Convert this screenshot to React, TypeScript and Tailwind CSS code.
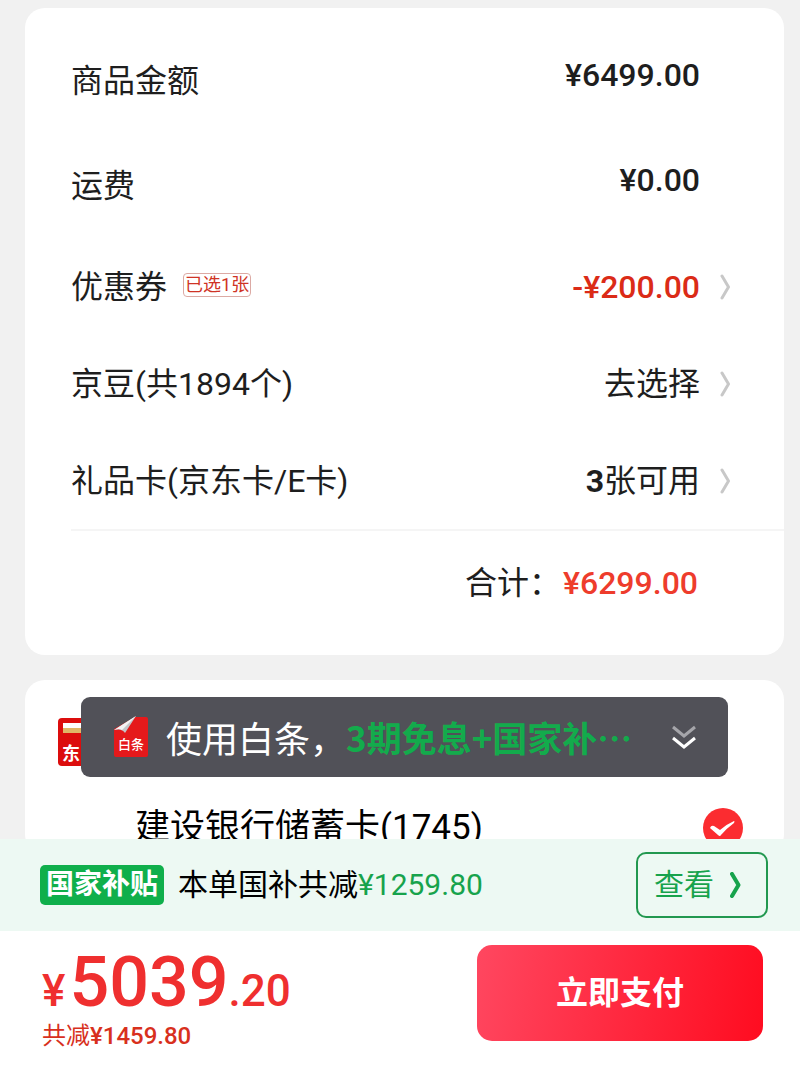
import React, { useState } from "react";

interface PriceRow {
  id: string;
  label: string;
  value: React.ReactNode;
  tag?: string;
  valueClass?: string;
  link?: boolean;
}

const rows: PriceRow[] = [
  { id: "goods", label: "商品金额", value: "¥6499.00", valueClass: "pb-3 font-medium" },
  { id: "freight", label: "运费", value: "¥0.00", valueClass: "pb-3 font-medium" },
  {
    id: "coupon",
    label: "优惠券",
    tag: "已选1张",
    value: "-¥200.00",
    valueClass: "font-medium text-[#db2b17]",
    link: true,
  },
  { id: "beans", label: "京豆(共1894个)", value: "去选择", link: true },
  {
    id: "giftcard",
    label: "礼品卡(京东卡/E卡)",
    value: (
      <>
        <span className="font-bold">3</span>张可用
      </>
    ),
    link: true,
  },
];

const Chevron: React.FC<{ className: string }> = ({ className }) => (
  <svg className={className} viewBox="0 0 12 26" fill="none" stroke="currentColor" aria-hidden="true">
    <path d="M2 2 L8.500 13 L2 24" strokeLinecap="round" strokeLinejoin="round" />
  </svg>
);

const WalletIcon = () => (
  <svg className="h-12 w-16" viewBox="0 0 64 48" aria-hidden="true">
    <rect width="64" height="48" rx="4" fill="#dc0d0d" />
    <rect x="5" y="5" width="54" height="6" fill="#fff" />
    <rect x="5" y="10" width="54" height="5" fill="#e0b767" />
    <text x="4" y="42" fill="#fff" fontSize="18" fontWeight="700">
      东
    </text>
  </svg>
);

const BaitiaoIcon = () => (
  <svg className="h-[42px] w-[34px] shrink-0" viewBox="0 0 34 42" aria-hidden="true">
    <path d="M21 1 H32 Q34 1 34 3 V39 Q34 41 32 41 H2 Q0 41 0 39 V13 Z" fill="#e5191b" />
    <path d="M22 0 L11 17 Q8 12 0 14 Z" fill="#c4c5c9" />
    <path d="M22 0 L8 14 Q5 12 0 14 Z" fill="#f3f3f4" />
    <text x="4" y="33" fill="#fff" fontSize="13" fontWeight="500">
      白条
    </text>
  </svg>
);

const DoubleChevron = () => (
  <svg className="h-6 w-6 shrink-0" viewBox="0 0 24 24" fill="none" strokeWidth="3" aria-hidden="true">
    <path d="M1 2 L12 11 L23 2" stroke="#a5a5aa" />
    <path d="M1 13 L12 22 L23 13" stroke="#fff" />
  </svg>
);

const PriceDetails = () => (
  <section className="rounded-[20px] bg-white pt-5 pb-5">
    <ul className="pl-[46px]">
      {rows.map((row) => {
        const content = (
          <>
            <span className="flex items-center gap-4">
              {row.label}
              {row.tag && (
                <span className="mb-1 rounded-sm border border-[#dcaaa4] px-px text-lg leading-[22px] text-[#cf3325]">
                  {row.tag}
                </span>
              )}
            </span>
            <span className="flex items-center gap-5">
              <span className={row.valueClass}>{row.value}</span>
              {row.link ? <Chevron className="h-[26px] w-3 stroke-3 text-[#c8c8c8]" /> : <span className="w-3" />}
            </span>
          </>
        );
        return (
          <li key={row.id}>
            {row.link ? (
              <button type="button" className="flex h-[97px] w-full items-center justify-between pr-[52px]">
                {content}
              </button>
            ) : (
              <div className="flex h-[105px] items-center justify-between pr-[52px]">{content}</div>
            )}
          </li>
        );
      })}
    </ul>
    <div className="ml-[46px] flex h-[106px] items-center justify-end gap-0.5 border-t-2 border-[#f5f5f5] pr-[86px]">
      <span>合计：</span>
      <span className="font-medium text-[#ee3c2c]">¥6299.00</span>
    </div>
  </section>
);

const PaymentMethods = () => {
  const [card, setCard] = useState("ccb-1745");

  return (
    <section className="relative rounded-[20px] bg-white pt-[38px] pr-[41px] pl-[33px]">
      <WalletIcon />
      <label className="mt-9 flex items-center justify-between pl-[77px] text-[35px] leading-[52px] text-black">
        建设银行储蓄卡(1745)
        <span className="grid size-10 place-items-center">
          <input
            type="radio"
            name="card"
            value="ccb-1745"
            checked={card === "ccb-1745"}
            onChange={(e) => setCard(e.target.value)}
            className="col-start-1 row-start-1 size-10 appearance-none rounded-full border-2 border-gray-300 checked:border-0 checked:bg-[#fb2c30]"
          />
          <svg className="pointer-events-none col-start-1 row-start-1 size-10" viewBox="0 0 40 40" aria-hidden="true">
            <path d="M7 20 Q8 17 11 18 L17 22 Q24 16 31 13 Q32 13 31 15 Q24 20 18 27 Q17 29 15 27 Z" fill="#fff" />
          </svg>
        </span>
      </label>

      <button
        type="button"
        className="absolute inset-x-14 top-[17px] flex h-20 items-center rounded-[9px] bg-[#515158] pr-8 pl-[33px] text-left font-['Noto_Sans_CJK_SC',sans-serif] text-white"
      >
        <BaitiaoIcon />
        <span className="ml-[18px] shrink-0 text-4xl">使用白条，</span>
        <span className="flex-1 text-[35px] leading-10 font-bold whitespace-nowrap text-[#13ab4c]">
          3期免息+国家补…
        </span>
        <DoubleChevron />
      </button>
    </section>
  );
};

const PayFooter = () => (
  <footer className="shrink-0 bg-white">
    <div className="flex h-[92px] items-center bg-[#edf9f3] pr-8 pl-10">
      <span className="rounded-[5px] bg-[#0faf4b] px-[6px] text-[28px] leading-10 font-bold text-white">国家补贴</span>
      <p className="ml-[14px] flex-1 text-3xl text-black">
        本单国补共减<span className="text-[#17a34c]">¥1259.80</span>
      </p>
      <button
        type="button"
        className="flex h-[66px] items-center gap-4 rounded-[10px] border-2 border-[#22984f] pr-6 pl-4 text-3xl text-[#17a34c]"
      >
        查看
        <Chevron className="h-[26px] w-3 stroke-4" />
      </button>
    </div>
    <div className="flex items-start justify-between pt-[14px] pr-[37px] pb-[21px] pl-[42px]">
      <div className="pt-1">
        <p className="text-[44px] leading-[66px] font-medium text-[#ef2f2f]">
          ¥<span className="ml-1 text-[70px]">5039</span>.20
        </p>
        <p className="text-2xl leading-6 text-[#d8301d]">
          共减<span className="font-medium">¥1459.80</span>
        </p>
      </div>
      <button
        type="button"
        className="h-24 w-[286px] rounded-[15px] bg-linear-[100deg] from-[#ff4760] to-[#ff0c20] text-[32px] font-bold text-white"
      >
        立即支付
      </button>
    </div>
  </footer>
);

export default function App() {
  return (
    <div className="flex h-screen flex-col bg-[#f1f1f1] font-[Roboto,'Noto_Sans_CJK_SC',sans-serif] text-[32px] leading-10 text-[#1e1e1e]">
      <main className="flex min-h-0 flex-1 flex-col gap-[25px] overflow-hidden pt-2 pr-4 pl-[25px]">
        <PriceDetails />
        <PaymentMethods />
      </main>
      <PayFooter />
    </div>
  );
}
